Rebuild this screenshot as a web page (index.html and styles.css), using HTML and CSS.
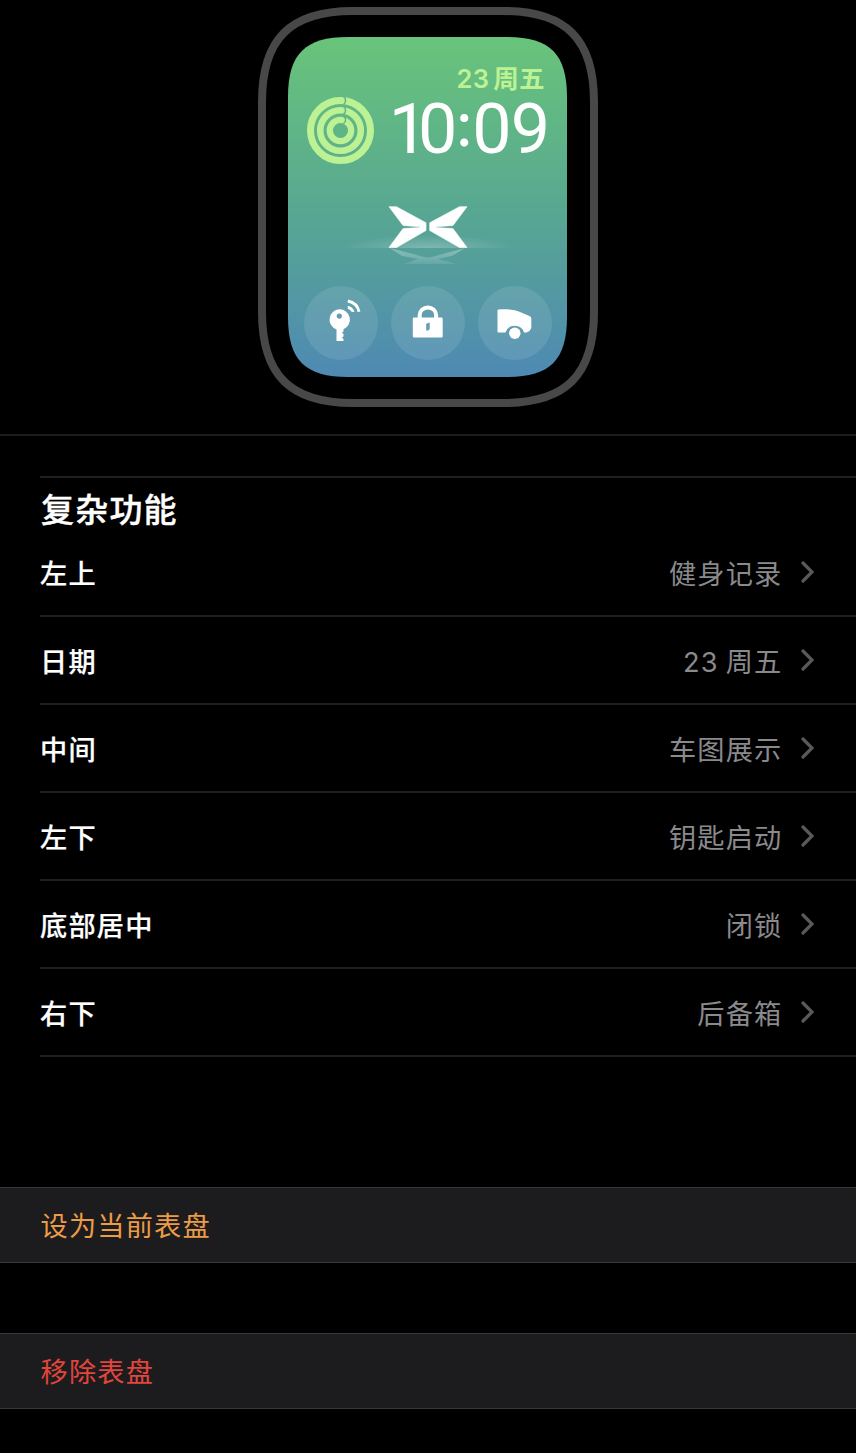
FILE: index.html
```html
<!DOCTYPE html>
<html lang="zh-CN">
<head>
    <meta charset="UTF-8">
    <meta name="viewport" content="width=device-width, initial-scale=1.0">
    <title>表盘</title>
    <link rel="stylesheet" href="styles.css">
</head>

<body>
    <!-- Watch preview -->
    <div class="preview">
        <div class="watch">
            <svg class="watch-case" viewBox="0 0 340 400">
                <defs>
                    <linearGradient id="face" x1="0" y1="0" x2="0" y2="1">
                        <stop offset="0" stop-color="#69c47a" />
                        <stop offset="0.5" stop-color="#58a891" />
                        <stop offset="1" stop-color="#4e89b3" />
                    </linearGradient>
                </defs>
                <path d="M4 95C4 32 32 4 95 4H245C308 4 336 32 336 95V305C336 368 308 396 245 396H95C32 396 4 368 4 305Z" fill="#000" stroke="#484848" stroke-width="8" />
                <path d="M30 90C30 47 47 30 90 30H249C292 30 309 47 309 90V310C309 353 292 370 249 370H90C47 370 30 353 30 310Z" fill="url(#face)" />
            </svg>
            <div class="face">
                <div class="face-date">23 周五</div>
                <div class="face-main">
                    <svg class="rings" viewBox="0 0 67 67">
                        <g fill="none" stroke="#bdf294">
                            <circle cx="33.5" cy="33.5" r="30" stroke-width="7" />
                            <circle cx="33.5" cy="33.5" r="20.3" stroke-width="6.6" />
                            <circle cx="33.5" cy="33.5" r="10.7" stroke-width="6.3" />
                        </g>
                        <!-- Rounded ring ends -->
                        <g fill="none" stroke="#5fb488" stroke-width="1.5">
                            <path d="M36.500 -0.500C39.300 1.500 39.300 5.500 36.500 7.500" />
                            <path d="M36.500 9.500C39.300 11.500 39.300 15 36.500 17" />
                            <path d="M36.500 19.300C39.300 21 39.300 24.500 36.500 26.500" />
                        </g>
                    </svg>
                    <div class="face-time"><span class="narrow">1</span>0<span class="colon">:</span>09</div>
                </div>
                <svg class="car-logo" viewBox="0 0 176 75">
                    <defs>
                        <radialGradient id="glow">
                            <stop offset="0" stop-color="#fff" stop-opacity="0.24" />
                            <stop offset="1" stop-color="#fff" stop-opacity="0" />
                        </radialGradient>
                        <linearGradient id="mirror" x1="0" y1="0" x2="0" y2="1">
                            <stop offset="0" stop-color="#fff" stop-opacity="0.32" />
                            <stop offset="1" stop-color="#fff" stop-opacity="0.1" />
                        </linearGradient>
                        <clipPath id="horizon"><path d="M0 30H176V50H0Z" /></clipPath>
                    </defs>
                    <ellipse cx="88" cy="50" rx="88" ry="13" fill="url(#glow)" clip-path="url(#horizon)" />
                    <path d="M50 50L86 59.500H90L125 50L112 58L98 61L116 66H64L78 61L62 58Z" fill="url(#mirror)" />
                    <g fill="#fff" stroke="#fff" stroke-width="0.6" stroke-linejoin="round">
                        <path d="M49 8.700H56.500L86 24.800V32.500L56.500 49.500H49L63 30.600L80 29.600V28.800L63 27.500Z" />
                        <path d="M127 8.700H119.500L89.700 24.800V32.500L119.500 49.500H127L113 30.600L96 29.600V28.800L113 27.500Z" />
                    </g>
                </svg>
                <div class="face-buttons">
                    <div class="face-button">
                        <svg viewBox="0 0 74 74">
                            <path fill="#fff" fill-rule="evenodd" d="M35.300 23.300A10.400 10.400 0 0 1 39.500 43.300V45.500L37.800 46.500L39.500 48V50.500L37.800 51.500L39.500 53V55H32.500V43.500A10.400 10.400 0 0 1 35.300 23.300ZM35.300 27.500A2.600 2.600 0 1 0 35.300 32.700A2.600 2.600 0 1 0 35.300 27.500Z" />
                            <path fill="none" stroke="#fff" stroke-width="2.9" d="M43.800 15C50 16.300 54 20.500 55 25.700" />
                            <path fill="#fff" d="M43.800 19.800C47 20.500 49.500 22.500 50.500 26L47.500 25.800Q45.800 23.300 43.800 22.800Z" />
                        </svg>
                    </div>
                    <div class="face-button">
                        <svg viewBox="0 0 74 74">
                            <path fill="none" stroke="#fff" stroke-width="4" d="M28.700 33V29A8.200 7.600 0 0 1 45.100 29V33" />
                            <path fill="#fff" fill-rule="evenodd" d="M23 31.500H50.500Q51.700 31.500 51.700 32.700V50.300Q51.700 51.500 50.500 51.500H23Q21.800 51.500 21.800 50.300V32.700Q21.800 31.500 23 31.500ZM38.700 36.500L35.200 37.800V44.500H37L38.700 43Z" />
                        </svg>
                    </div>
                    <div class="face-button">
                        <svg viewBox="0 0 74 74">
                            <path fill="#fff" d="M20.500 23.500C30 23 37 23.500 42 26L52 30.300Q53.300 31 53.300 32.500V42L51.500 45L48.500 46.500H46A9.700 9.700 0 0 0 27.500 46.500H20.500Q19.500 46.500 19.500 45.500V24.500Q19.500 23.500 20.500 23.500Z" />
                            <circle cx="36.800" cy="47.200" r="5.700" fill="#fff" />
                        </svg>
                    </div>
                </div>
            </div>
        </div>
    </div>

    <!-- Complications -->
    <div class="complications">
        <h2>复杂功能</h2>
        <div class="row"><span class="label">左上</span><span class="value">健身记录</span><svg class="chevron" viewBox="0 0 14 22"><path d="M2 2L11 11L2 20" /></svg></div>
        <div class="row"><span class="label">日期</span><span class="value">23 周五</span><svg class="chevron" viewBox="0 0 14 22"><path d="M2 2L11 11L2 20" /></svg></div>
        <div class="row"><span class="label">中间</span><span class="value">车图展示</span><svg class="chevron" viewBox="0 0 14 22"><path d="M2 2L11 11L2 20" /></svg></div>
        <div class="row"><span class="label">左下</span><span class="value">钥匙启动</span><svg class="chevron" viewBox="0 0 14 22"><path d="M2 2L11 11L2 20" /></svg></div>
        <div class="row"><span class="label">底部居中</span><span class="value">闭锁</span><svg class="chevron" viewBox="0 0 14 22"><path d="M2 2L11 11L2 20" /></svg></div>
        <div class="row"><span class="label">右下</span><span class="value">后备箱</span><svg class="chevron" viewBox="0 0 14 22"><path d="M2 2L11 11L2 20" /></svg></div>
    </div>

    <!-- Actions -->
    <div class="action action-set">设为当前表盘</div>
    <div class="action action-remove">移除表盘</div>
</body>

</html>
```
FILE: styles.css
```css
* {
    box-sizing: border-box;
}

body {
    margin: 0;
    background-color: #000;
    color: #fff;
    font-family: Inter, "Noto Sans CJK SC", sans-serif;
    font-size: 27.2px;
    letter-spacing: 1.2px;
    word-spacing: -2px;
}

svg {
    display: block;
}

/* Watch preview */
.preview {
    height: 436px;
    padding-top: 7px;
    border-bottom: 2px solid #1c1c1d;
}

.watch {
    display: grid;
    width: 340px;
    height: 400px;
    margin: 0 auto;
}

.watch-case,
.face {
    grid-area: 1 / 1;
    width: 340px;
    height: 400px;
}

.face {
    padding: 55px 46px 0;
}

.face-date {
    height: 35px;
    padding-right: 7px;
    text-align: right;
    font-size: 25.5px;
    font-weight: 600;
    line-height: 33px;
    letter-spacing: 0.4px;
    word-spacing: -3px;
    color: #bdf294;
}

.face-main {
    display: flex;
    justify-content: space-between;
    height: 67px;
    padding: 0 3px;
}

.rings {
    width: 67px;
    height: 67px;
}

.face-time {
    font-family: Roboto, sans-serif;
    font-size: 70px;
    line-height: 65px;
    letter-spacing: -1px;
}

.narrow {
    letter-spacing: -10px;
}

/* The colon sits at the middle of the digits */
.colon {
    display: inline-block;
    width: 16px;
    line-height: 40px;
    vertical-align: 7px;
    font-family: Lato, sans-serif;
    font-size: 64px;
}

.car-logo {
    width: 176px;
    height: 75px;
    margin: 34px auto 0;
}

.face-buttons {
    display: flex;
    justify-content: space-between;
    margin-top: 13px;
}

.face-button {
    width: 74px;
    height: 74px;
    border-radius: 50%;
    background-color: rgba(255, 255, 255, 0.1);
}

/* Complications */
.complications {
    margin: 40px 0 0 40px;
    border-top: 2px solid #1f1f20;
}

h2 {
    height: 51px;
    margin: 0;
    padding-left: 1px;
    font-size: 33px;
    font-weight: 500;
    line-height: 64px;
    -webkit-text-stroke: 0.4px #fff;
}

.row {
    display: flex;
    align-items: center;
    height: 88px;
    padding-right: 41px;
    border-bottom: 2px solid #1f1f20;
}

.label {
    flex: 1;
    font-weight: 500;
    -webkit-text-stroke: 0.2px #fff;
}

.value {
    color: #8a8a8d;
}

.chevron {
    width: 14px;
    height: 22px;
    margin-left: 18.5px;
    fill: none;
    stroke: #59595c;
    stroke-width: 3.2;
    stroke-linecap: round;
}

/* Actions */
.action {
    height: 76px;
    padding-left: 40.5px;
    border-top: 1px solid #38383a;
    border-bottom: 1px solid #38383a;
    background-color: #1c1c1e;
    line-height: 77px;
}

.action-set {
    margin-top: 130px;
    color: #ec9b47;
}

.action-remove {
    margin-top: 70px;
    color: #e2453c;
}
```
